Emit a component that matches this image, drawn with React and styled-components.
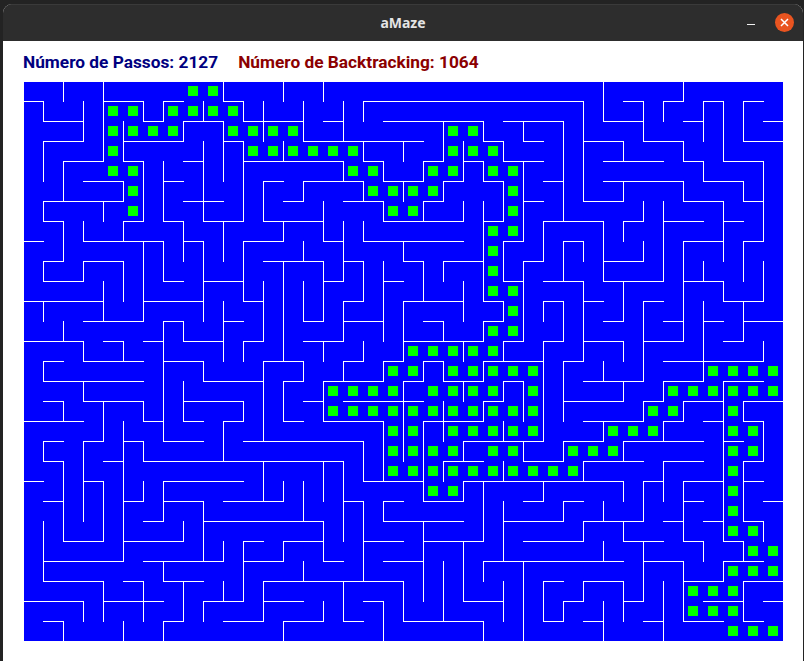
import React from 'react';
import styled, { createGlobalStyle } from 'styled-components';

const HORIZONTAL = {
  1: '0-1 4-6 7-8 10-11 17-28 30-31 32-33 34-35 36-37',
  2: '1-3 6-7 8-10 11-14 15-16 18-23 24-27 29-31 33-34 37-38',
  3: '1-3 5-8 10-11 14-20 23-24 25-26 28-30 31-33 36-38',
  4: '2-4 5-6 8-9 11-16 17-18 20-21 22-23 24-26 29-32 33-34 35-37',
  5: '3-5 7-8 12-13 14-17 18-20 21-22 23-24 26-27 29-33 34-36',
  6: '1-5 8-10 13-14 16-18 20-21 25-26 28-30 33-35 36-37',
  7: '1-2 5-6 7-8 9-11 12-15 18-22 23-24 26-29 30-31 32-34 35-36',
  8: '0-1 3-7 8-9 11-13 15-16 17-22 24-25 27-28 33-35 36-37',
  9: '1-2 3-5 12-15 16-17 19-20 21-23 25-26 29-31',
  10: '1-3 7-8 9-11 15-16 18-19 24-25 26-28 29-32 33-35',
  11: '0-4 6-9 11-12 16-17 19-22 23-24 26-27 28-29 31-32 35-37',
  12: '3-6 7-8 10-11 14-15 16-18 20-21 23-24 29-30 32-33 34-35 36-38',
  13: '0-3 4-5 6-7 8-10 11-12 14-16 19-23 24-25 26-27 28-30 31-33 35-36',
  14: '1-2 3-6 7-9 12-14 16-17 18-19 20-21 23-26 27-28 32-37',
  15: '1-6 9-12 13-14 15-18 19-20 21-23 24-25 28-31 32-34 35-37',
  16: '1-2 3-6 8-11 14-15 16-20 23-24 27-30 31-32 33-35 36-38',
  17: '0-3 6-7 8-9 10-11 13-14 15-18 20-23 28-31 32-33 34-35 36-37',
  18: '1-2 3-4 5-6 7-9 11-17 22-26 27-29 30-34 35-36',
  19: '1-2 4-5 6-16 21-23 25-27 28-31 32-34 36-37',
  20: '0-1 3-4 7-11 17-20 22-30 31-32 33-35 36-37',
  21: '1-2 5-6 7-9 10-13 16-17 18-19 20-22 25-26 27-28 33-34 37-38',
  22: '6-7 9-15 18-22 24-27 28-31 32-33 34-35 36-37',
  23: '2-4 5-8 11-12 13-15 17-19 20-23 25-28 30-32 33-34 35-36',
  24: '1-5 6-10 11-13 15-16 18-20 23-30 31-33 35-37',
  25: '1-4 5-6 7-9 12-19 26-27 28-30 33-35 36-38',
  26: '0-3 4-7 9-11 12-14 17-18 22-24 27-28 30-31 34-36 37-38',
  27: '1-2 7-8 10-12 13-15 16-17 19-23 26-27 28-29 31-32 33-35 36-37',
};

const VERTICAL = {
  1: '1-2 3-5 6-7 9-10 11-12 14-15 18-19 22-25',
  2: '0-1 4-6 7-9 12-13 16-17 19-23 27-28',
  3: '1-3 7-8 9-10 13-14 15-16 18-22 26-27',
  4: '0-4 6-7 10-12 16-18 20-23 25-27',
  5: '2-4 5-6 7-8 9-11 13-14 17-24 27-28',
  6: '1-2 4-7 8-12 16-17 18-19 20-21 25-27',
  7: '1-2 4-7 8-10 12-18 20-22 24-25 27-28',
  8: '2-3 7-9 12-13 15-17 22-23 25-27',
  9: '1-2 3-7 8-12 14-15 21-24 26-27',
  10: '0-1 2-5 7-9 11-14 17-19 23-24 25-26',
  11: '1-2 3-7 8-11 13-14 16-17 23-26',
  12: '1-3 5-7 10-13 14-18 19-21 25-27',
  13: '0-1 3-4 7-8 9-14 15-17 20-21 23-24 27-28',
  14: '1-3 5-6 8-9 10-12 14-15 20-22 24-25',
  15: '0-1 6-8 9-12 13-14 15-17 19-21 22-24 26-27',
  16: '1-3 4-5 7-10 11-13 14-15 19-23 25-27',
  17: '1-2 3-4 5-6 7-8 9-11 13-14 18-20 21-25',
  18: '4-5 6-7 9-13 14-15 17-20 21-22 26-28',
  19: '3-4 5-6 8-9 11-14 15-19 25-27',
  20: '4-5 6-7 9-11 14-15 17-21 22-26',
  21: '2-4 5-6 9-10 12-13 14-15 16-18 19-20 24-27',
  22: '3-5 6-7 10-12 13-14 15-16 18-19 20-21 23-26',
  23: '2-3 4-5 6-11 12-13 14-15 16-17 20-23 24-25 27-28',
  24: '3-4 5-7 8-10 11-12 13-14 15-16 17-18 19-20 21-24 25-27',
  25: '2-3 4-8 9-13 15-17 18-19 24-28',
  26: '7-9 11-12 13-18 20-21 25-27',
  27: '2-7 8-10 11-13 14-17 18-19 21-22 26-27',
  28: '1-6 8-9 10-14 19-20 22-23 25-26',
  29: '0-2 7-10 14-15 17-18 21-22 23-24 26-28',
  30: '3-4 5-6 7-8 10-12 13-14 15-16 18-19 20-21 22-23 25-27',
  31: '1-3 6-7 8-9 11-15 16-17 20-22 23-26',
  32: '1-2 6-10 15-16 17-18 19-21 25-28',
  33: '0-1 3-4 5-6 8-13 16-17 20-23 24-27',
  34: '1-3 4-5 9-10 11-15 23-24',
  35: '1-4 6-9 10-11 15-23 24-25',
  36: '1-3 5-6 8-10 11-13 16-17 19-22 23-24 25-27',
  37: '4-8 9-11 13-14 17-19 22-23',
};

// cells of the path, per row
const PATH = [
  [8, 9],
  [4, 5, 7, 8, 9, 10],
  [4, 5, 6, 7, 10, 11, 12, 13, 21, 22],
  [4, 11, 12, 13, 14, 15, 16, 21, 22, 23],
  [4, 5, 16, 17, 20, 21, 23, 24],
  [5, 17, 18, 19, 20, 24],
  [5, 18, 19, 24],
  [23, 24],
  [23],
  [23],
  [23, 24],
  [24],
  [23, 24],
  [19, 20, 21, 22, 23],
  [18, 19, 21, 22, 23, 24, 25, 34, 35, 36, 37],
  [15, 16, 17, 18, 20, 21, 22, 23, 25, 32, 33, 34, 35, 36, 37],
  [15, 16, 17, 18, 19, 20, 21, 22, 23, 24, 25, 31, 32, 35],
  [18, 19, 21, 22, 23, 24, 25, 29, 30, 31, 35, 36],
  [18, 19, 20, 21, 23, 24, 27, 28, 29, 35, 36],
  [18, 19, 20, 21, 22, 23, 24, 25, 26, 27, 35],
  [20, 21, 35],
  [35],
  [35, 36],
  [36, 37],
  [35, 36, 37],
  [33, 34, 35],
  [33, 34, 35],
  [35, 36, 37],
];

const CELL = 20;

const spans = (text) => text.split(' ').map((s) => s.split('-').map(Number));

const wallPath = () => {
  let d = '';
  Object.entries(HORIZONTAL).forEach(([row, list]) => {
    spans(list).forEach(([a, b]) => {
      d += `M${a * CELL - 1} ${row * CELL - 0.5}H${b * CELL}`;
    });
  });
  Object.entries(VERTICAL).forEach(([col, list]) => {
    spans(list).forEach(([a, b]) => {
      d += `M${col * CELL - 0.5} ${a * CELL - 1}V${b * CELL}`;
    });
  });
  return d;
};

const GlobalStyle = createGlobalStyle`
  html, body {
    margin: 0;
    padding: 0;
    background: #232323;
  }
`;

const Desktop = styled.div`
  width: 804px;
  height: 661px;
  overflow: hidden;
  padding: 4px 1px 0 3px;
  box-sizing: border-box;
  background: #232323;
`;

const Window = styled.div`
  height: 100%;
  display: flex;
  flex-direction: column;
  background: #fff;
  border-radius: 9px 9px 0 0;
  overflow: hidden;
`;

const TitleBar = styled.header`
  position: relative;
  flex: none;
  height: 37px;
  display: flex;
  align-items: center;
  justify-content: center;
  background: #2d2d2d;
  box-shadow: inset 0 1px 0 #3a3a3a;
`;

const Title = styled.span`
  font-family: 'Noto Sans', Roboto, sans-serif;
  font-size: 14px;
  font-weight: 700;
  color: #e4e4e4;
`;

const Controls = styled.div`
  position: absolute;
  right: 9px;
  top: 9px;
  display: flex;
  align-items: center;
  gap: 20px;
`;

const MinimizeIcon = styled.span`
  width: 8px;
  height: 1px;
  margin-top: 3px;
  background: #f0f0f0;
`;

const CloseButton = styled.span`
  width: 19px;
  height: 19px;
  border-radius: 50%;
  display: flex;
  align-items: center;
  justify-content: center;
  background: #e95420;
`;

const Stats = styled.div`
  flex: none;
  height: 41px;
  padding-left: 20px;
  display: flex;
  align-items: center;
  gap: 20px;
  font-family: Roboto, sans-serif;
  font-size: 17.3px;
  font-weight: 700;
`;

const Stat = styled.span`
  color: ${({ $color }) => $color};
`;

const Board = styled.svg`
  display: block;
  flex: none;
  margin-left: 21px;
  background: #0000ff;
`;

export default function App() {
  return (
    <>
      <GlobalStyle />
      <Desktop>
        <Window>
          <TitleBar>
            <Title>aMaze</Title>
            <Controls>
              <MinimizeIcon />
              <CloseButton>
                <svg width="9" height="9" viewBox="0 0 9 9">
                  <path d="M1 1L8 8M8 1L1 8" stroke="#fff" strokeWidth="1.5" fill="none" />
                </svg>
              </CloseButton>
            </Controls>
          </TitleBar>
          <Stats>
            <Stat $color="#00007f">Número de Passos: 2127</Stat>
            <Stat $color="#8b0000">Número de Backtracking: 1064</Stat>
          </Stats>
          <Board width="759" height="559" viewBox="0 0 759 559">
            {PATH.map((cols, row) =>
              cols.map((col) => (
                <rect
                  key={`${row}-${col}`}
                  x={col * CELL + 4}
                  y={row * CELL + 4}
                  width="10"
                  height="10"
                  fill="#00ff00"
                />
              )),
            )}
            <path d={wallPath()} stroke="#fff" strokeWidth="1" fill="none" shapeRendering="crispEdges" />
          </Board>
        </Window>
      </Desktop>
    </>
  );
}
